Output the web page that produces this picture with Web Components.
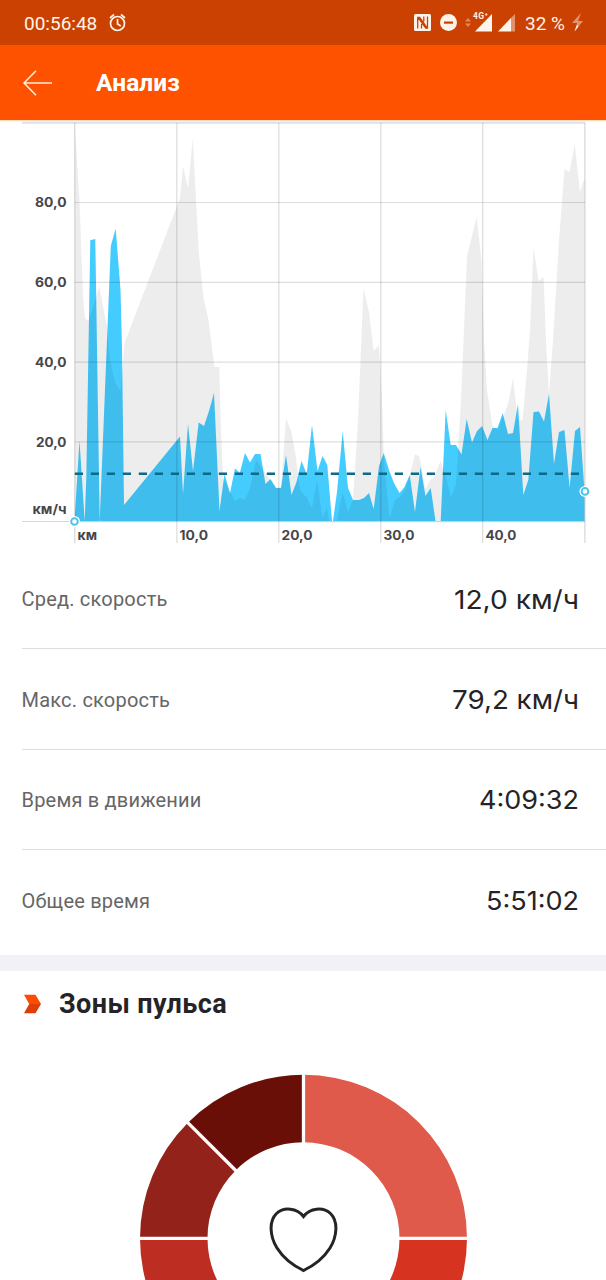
<!DOCTYPE html>
<html lang="ru">
<head>
<meta charset="utf-8">
<title>Анализ</title>
<style>
html,body{margin:0;padding:0;background:#fff}
body{width:606px;height:1280px;overflow:hidden;font-family:Roboto,"Noto Sans",sans-serif}
</style>
</head>
<body>
<ride-analysis></ride-analysis>
<script>
const define = (name, html, render) => customElements.define(name, class extends HTMLElement {
  constructor() {
    super();
    this.attachShadow({mode: 'open'});
  }
  connectedCallback() {
    const t = document.createElement('template');
    t.innerHTML = html;
    this.shadowRoot.replaceChildren(t.content.cloneNode(true));
    if (render) render(this, this.shadowRoot);
  }
});

define('status-bar', `
<style>
:host{display:flex;box-sizing:border-box;height:45px;padding:0 24px;align-items:center;background:#cb4101;color:#fff4e6;font-size:19px;line-height:45px}
svg{display:block;flex:none}
.clock{margin-left:9px}
.right{margin-left:auto;display:flex;align-items:center}
.time{width:75px;white-space:nowrap;padding-top:2px}
.pct{padding-top:2px;margin-left:9px;width:45px;white-space:nowrap}
</style>
<span class="time"><slot name="time"></slot></span>
<svg class="clock" width="20" height="45" viewBox="0 0 20 45" fill="none" stroke="#fff4e6" stroke-width="1.7"><circle cx="9.5" cy="23.5" r="7"/><path d="M9.5 19v5l3.3 2M2 18l4-3.5M17 18l-4-3.5"/></svg>
<span class="right">
<svg width="104" height="45" viewBox="412 0 104 45">
 <rect x="414" y="14" width="17" height="17" rx="1.5" fill="#fff4ea"/>
 <path d="M417.700 28.500V17.500h2l7.500 10.500M427.500 16.500V28h-1.800L418.500 18M421.500 24v4.500M423.800 21.500V16.500" fill="none" stroke="#cb4101" stroke-width="1.300"/>
 <circle cx="448.500" cy="22.500" r="8.500" fill="#fff4ea"/><rect x="444" y="21.500" width="9" height="2.200" fill="#cb4101"/>
 <path d="M465 21.500l3-3.500 3 3.500zM465 23.500l3 3.500 3-3.500z" fill="#e38a60"/>
 <path d="M475 31.500L492 14v17.500z" fill="#fff4ea"/>
 <text x="473" y="19" font-family="Roboto" font-size="8.500" font-weight="700" fill="#fff4ea" stroke="#cb4101" stroke-width="1.600" paint-order="stroke" textLength="15">4G⁺</text>
 <path d="M498 31.500L511 18V31.500z" fill="#fff4ea"/><path d="M511 18l4-4v17.500h-4z" fill="#e2936c"/>
</svg>
<span class="pct"><slot name="battery"></slot></span>
<svg width="16" height="45" viewBox="0 0 16 45" style="margin-right:-4px"><path d="M11 13L2 23h5L4.500 31.500 13 21H8z" fill="#e2936c"/><path d="M7 25L4.500 31.500l4-5z" fill="#fff4ea"/></svg>
</span>`);

define('app-bar', `
<style>
:host{display:flex;box-sizing:border-box;height:75px;padding-left:23px;align-items:center;background:#fe5200;color:#fff}
svg{display:block;width:30px;height:30px}
b{margin-left:43px;font-size:24.500px;line-height:30px;letter-spacing:.1px;padding-top:1px}
</style>
<svg viewBox="0 0 30 30" fill="none" stroke="#fff0dc" stroke-width="1.600"><path d="M29 15H1.500M13 2.700L1 15l12 12.300"/></svg>
<b><slot></slot></b>`);

const SPEED = '74.5,521 79.5,440.5 84.7,521 86.300,478 90.3,240.300 95.3,239 99.7,521 110.800,246 115.7,228.500 120.5,290 122,348 124,505 180,436.500 183,494 188,424 193,471 198.700,422.500 204,426 209,411 214,393 219.5,511 224.5,474 230,493 235,468.500 239.800,473 245,453 250,462.500 255,454 260.5,454 265.5,484 270.5,479 276,488 281,488 286,455 291.5,495 296.5,482 301.5,461 306.700,474 312,425 317.5,471 322.5,456 327.300,465 332,521 333,521 337,492 342.700,431 348,488 353,500 359,500 364,498 369,493 373.700,509 379,466 383.700,453 389,470 394,483 399.5,493 404.5,487 409.700,475 415,512 420.5,467 425.5,496 430.700,488 435.5,521 440.700,521 445.700,410 450.700,445 456,445 461.500,454.500 466.700,419 472,442.500 477,431 482,426 487.500,440 492.500,428 497.500,428 502.700,413 508,434 513,433 518,404 523.300,495 528.300,480 533.500,412 539,411.500 544,421.500 549,394 554,464 559,432 564.500,430 569.600,488 575,431 580,427 584.500,491 584.500,521';
const ELEV = '75,130 79.5,200 83,295 85,318 88,321 93,308 99.3,286 107,327 110,360 115,382 120.500,391 124.500,343 180,198 183,166 188,188 192.800,138 198.800,252 203.500,298 208.500,320 211,340 214.500,367 219.300,367 221,430 223,478 229,490 235,501 240,498 245,500 250,488 256,460 262,468 276,488 281,487 286,418 291.500,432 296,458 299,484 301.500,492 306.500,497 312,508 317,480 322.500,518 327,507 329,521 337,521 342.500,492 348,512 353,500 358,420 363.500,288 369,312 373.700,351 379,345 382,400 384,460 389.500,518 395,500 400,497 405,490 410,474 415,454 419.600,457 425.500,489 430,480 434,477 440.500,461 445.500,475 451,497 456,484 461,400 467,256 476.700,217 481.500,260 484,340 487,390 492.500,426 498,430 508,404 513,378 518,420 522.500,420 527,370 530,330 533.500,247 538.600,281 543.600,277 546,340 549,394 553,340 559,240 564.500,169 569.600,172 574.700,144 580,192 584.500,178 584.500,521 75,521';

define('speed-chart', `
<style>
:host{display:block;height:429px}
svg{display:block}
text{font:700 13px Inter,"Noto Sans",sans-serif;fill:#46464a}
</style>
<svg width="606" height="429" viewBox="0 120 606 429">
<rect y="120" width="606" height="1.300" fill="#ffdcbc"/>
<g id="plot"></g></svg>`, (host, root) => {
  const label = (x, y, w, s) => `<text x="${x}" y="${y}" textLength="${w}" lengthAdjust="spacingAndGlyphs">${s}</text>`;
  let s = `<polygon points="${SPEED}" fill="#44ccff"/><polygon points="${ELEV}" fill="#000" fill-opacity=".07"/>`;
  s += '<path d="M22 122.800H585" stroke="#dce1e8" stroke-width="2"/><path d="M22 521.500H75" stroke="#d8d8da" stroke-width="1.200"/><path d="M75 521.700H585" stroke="#a4d4e8" stroke-width="1"/>';
  [202.5, 282.4, 362.1, 441.800].forEach((y, i) => {
    s += `<path d="M75 ${y}H585" stroke="#000" stroke-opacity=".13" stroke-width="1.200"/>` + label(i === 3 ? 36 : 35, y + 4.700, i === 3 ? 30.500 : 31.500, `${80 - i * 20},0`);
  });
  [74.700, 176.800, 278.800, 380.800, 482.700, 584.900].forEach((x, i) => {
    s += `<path d="M${x} 123V543" stroke="#000" stroke-opacity="${i === 0 || i === 5 ? .14 : .12}" stroke-width="1.400"/>`;
    if (i > 0 && i < 5) s += label(x + 2.700, 540, i === 1 ? 28.500 : 31, `${i * 10},0`);
  });
  s += label(32.500, 513.500, 34, 'км/ч') + label(77.500, 540, 19.500, 'км');
  s += '<path d="M74.800 473.700H585" stroke="#0b6989" stroke-width="2.600" stroke-dasharray="8.200 7.800"/>';
  [[74.500, 521.500], [585, 491.400]].forEach(([x, y]) => {
    s += `<circle cx="${x}" cy="${y}" r="5.500" fill="#fff"/><circle cx="${x}" cy="${y}" r="3.300" fill="#fff" stroke="#50c4e6" stroke-width="2"/>`;
  });
  root.querySelector('#plot').innerHTML = s;
});

define('stat-row', `
<style>
:host{display:flex;box-sizing:border-box;height:100.400px;margin-left:22px;padding-right:27px;justify-content:space-between;align-items:center;border-bottom:1.400px solid #dedee0}
:host([last]){border-bottom:0}
.label{font-size:20px;letter-spacing:.200px;color:#666;white-space:nowrap;margin-left:-.5px;padding-top:1px}
svg{display:block;overflow:visible}
text{font:400 26px Inter,"Noto Sans",sans-serif;fill:#242428}
</style>
<span class="label"><slot></slot></span><svg height="30"><text x="-1" y="25" lengthAdjust="spacingAndGlyphs"></text></svg>`, (host, root) => {
  const w = host.getAttribute('width');
  root.querySelector('svg').setAttribute('width', w);
  const t = root.querySelector('text');
  t.setAttribute('textLength', +w + 1);
  t.textContent = host.getAttribute('value');
});

define('section-title', `
<style>
:host{display:flex;box-sizing:border-box;height:83px;border-top:16.500px solid #f1f1f6;padding-left:23px;align-items:center;color:#242428}
svg{display:block;margin-top:-2px}
b{font-size:27px;letter-spacing:.420px;margin-left:17px;line-height:32px;margin-top:-1px}
</style>
<svg width="19" height="20" viewBox="0 0 19 20"><path d="M1 .800h11.500L18 10H6.200z" fill="#fc4c02"/><path d="M18 10l-5.500 9.200H1L6.200 10z" fill="#dc3f0a"/></svg>
<b><slot></slot></b>`);

define('pulse-zones', `
<style>:host{display:block;height:242px;overflow:hidden}svg{display:block}</style>
<svg width="606" height="242" viewBox="0 1038 606 242"><g id="ring"></g>
<path d="M303.500 1216.500C297 1208 284 1206.500 276.500 1213.500C268.500 1221.500 270 1236.500 277 1248C284 1259 294 1266 303.500 1270.500C313 1266 323 1259 330 1248C337 1236.500 338.500 1221.500 330.500 1213.500C323 1206.500 310 1208 303.500 1216.500Z" fill="#fff" stroke="#242428" stroke-width="3"/></svg>`, (host, root) => {
  const cx = 303.500, cy = 1238.300, R = 163.500, r = 96;
  const at = (a, q) => { const t = a * Math.PI / 180; return `${(cx + q * Math.sin(t)).toFixed(2)} ${(cy - q * Math.cos(t)).toFixed(2)}`; };
  root.querySelector('#ring').innerHTML =
    [[0, 90, '#df5a4a'], [90, 180, '#d63421'], [180, 270, '#bd2d22'], [270, 315, '#93231a'], [315, 360, '#690f08']].map(([a, b, c]) =>
      `<path d="M${at(a, R)}A${R} ${R} 0 0 1 ${at(b, R)}L${at(b, r)}A${r} ${r} 0 0 0 ${at(a, r)}Z" fill="${c}"/>`).join('') +
    [0, 90, 270, 315].map(a => `<path d="M${at(a, r - 3)}L${at(a, R + 3)}" stroke="#fff" stroke-width="3.300"/>`).join('');
});

define('ride-analysis', `
<style>:host{display:flex;flex-direction:column;height:1280px;background:#fff;overflow:hidden}:host>*{flex:none}.stats{height:406px}</style>
<status-bar><span slot="time">00:56:48</span><span slot="battery">32 %</span></status-bar>
<app-bar>Анализ</app-bar>
<speed-chart></speed-chart>
<div class="stats">
<stat-row value="12,0 км/ч" width="124">Сред. скорость</stat-row>
<stat-row value="79,2 км/ч" width="126">Макс. скорость</stat-row>
<stat-row value="4:09:32" width="99">Время в движении</stat-row>
<stat-row value="5:51:02" width="92" last>Общее время</stat-row>
</div>
<section-title>Зоны пульса</section-title>
<pulse-zones></pulse-zones>`);
</script>
</body>
</html>
